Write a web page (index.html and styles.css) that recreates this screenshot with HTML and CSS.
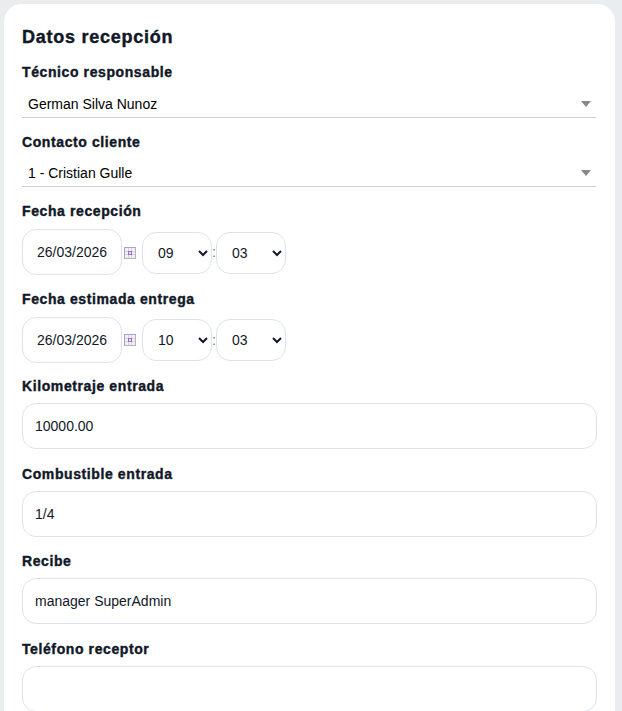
FILE: index.html
```html
<!DOCTYPE html>
<html>
<head>
    <meta charset="utf-8">
    <title>Datos recepción</title>
    <link rel="stylesheet" href="styles.css">
</head>
<body>
    <div class="card">
        <h2>Datos recepción</h2>

        <div class="combo-group">
            <label>Técnico responsable</label>
            <div class="combo"><span>German Silva Nunoz</span><i class="arrow"></i></div>
        </div>

        <div class="combo-group">
            <label>Contacto cliente</label>
            <div class="combo"><span>1 - Cristian Gulle</span><i class="arrow"></i></div>
        </div>

        <div class="date-group">
            <label>Fecha recepción</label>
            <div class="date-row">
                <input class="date" type="text" value="26/03/2026">
                <svg class="cal" width="12" height="12" viewBox="0 0 12 12">
                    <rect x="0.5" y="0.5" width="11" height="11" fill="#f1f0f6" stroke="#a9a0d6"/>
                    <path d="M4.5 1v10M7.5 1v10M1 4.5h10M1 7.5h10" stroke="#d4d2da" fill="none"/>
                    <rect x="4.5" y="4.5" width="3" height="3" fill="#e8dcef" stroke="#a070b8"/>
                    <path d="M11.5 1v11M1 11.5h11" stroke="#b5b5b5" fill="none"/>
                </svg>
                <select class="time"><option>09</option></select>
                <span class="colon">:</span>
                <select class="time"><option>03</option></select>
            </div>
        </div>

        <div class="date-group">
            <label>Fecha estimada entrega</label>
            <div class="date-row">
                <input class="date" type="text" value="26/03/2026">
                <svg class="cal" width="12" height="12" viewBox="0 0 12 12">
                    <rect x="0.5" y="0.5" width="11" height="11" fill="#f1f0f6" stroke="#a9a0d6"/>
                    <path d="M4.5 1v10M7.5 1v10M1 4.5h10M1 7.5h10" stroke="#d4d2da" fill="none"/>
                    <rect x="4.5" y="4.5" width="3" height="3" fill="#e8dcef" stroke="#a070b8"/>
                    <path d="M11.5 1v11M1 11.5h11" stroke="#b5b5b5" fill="none"/>
                </svg>
                <select class="time"><option>10</option></select>
                <span class="colon">:</span>
                <select class="time"><option>03</option></select>
            </div>
        </div>

        <div class="form-group">
            <label>Kilometraje entrada</label>
            <input type="text" value="10000.00">
        </div>

        <div class="form-group">
            <label>Combustible entrada</label>
            <input type="text" value="1/4">
        </div>

        <div class="form-group">
            <label>Recibe</label>
            <input type="text" value="manager SuperAdmin">
        </div>

        <div class="form-group">
            <label>Teléfono receptor</label>
            <input type="text">
        </div>
    </div>
</body>
</html>
```

FILE: styles.css
```css
html, body { height: 711px; overflow: hidden; }
body { margin: 0; background: #e9edf0; font-family: "Liberation Sans", Arial, sans-serif; color: #111827; padding: 4px 7px 0 4px; }
.card { background: #fff; border-radius: 18px 18px 0 0; padding: 22px 18px 0 18px; height: 720px; }
h2 { margin: 0 0 15px; padding-top: 1px; font-size: 18px; line-height: 20px; font-weight: 700; letter-spacing: 0.75px; -webkit-text-stroke: 0.4px #111827; }
label { display: block; font-size: 14px; line-height: 20px; font-weight: 700; letter-spacing: 0.6px; -webkit-text-stroke: 0.4px #111827; }
.combo-group { margin-bottom: 14px; }
.combo { display: flex; justify-content: space-between; align-items: center; height: 26.5px; margin: 9px 1px 0 0; padding: 0 5px 0 6px; border-bottom: 1px solid #cfcfcf; font-size: 14px; color: #000; box-sizing: border-box; }
.arrow { width: 0; height: 0; border-left: 5px solid transparent; border-right: 5px solid transparent; border-top: 6px solid #888; }
.date-group { margin-bottom: 13.6px; }
.date-row { display: flex; align-items: center; height: 46px; margin-top: 8px; }
input { box-sizing: border-box; font-family: inherit; font-size: 14px; color: #111827; background: #fff; border: 1px solid #dbe3ef; border-radius: 14px; outline: none; }
.date { width: 100px; height: 46px; padding: 0; text-align: center; }
.cal { margin: 1px 6px 0 2px; flex: none; }
.time { width: 70px; height: 42px; margin-top: 1px; box-sizing: border-box; font-family: inherit; font-size: 14px; color: #111827; background: #fff; border: 1px solid #dbe3ef; border-radius: 14px; padding: 0 0 0 11px; }
.colon { width: 4px; font-size: 14px; color: #6b7280; text-align: center; }
.form-group { margin-bottom: 14.5px; }
.form-group label { margin-bottom: 7px; }
.form-group input { display: block; width: 100%; height: 46px; padding: 0 12px; }
```
